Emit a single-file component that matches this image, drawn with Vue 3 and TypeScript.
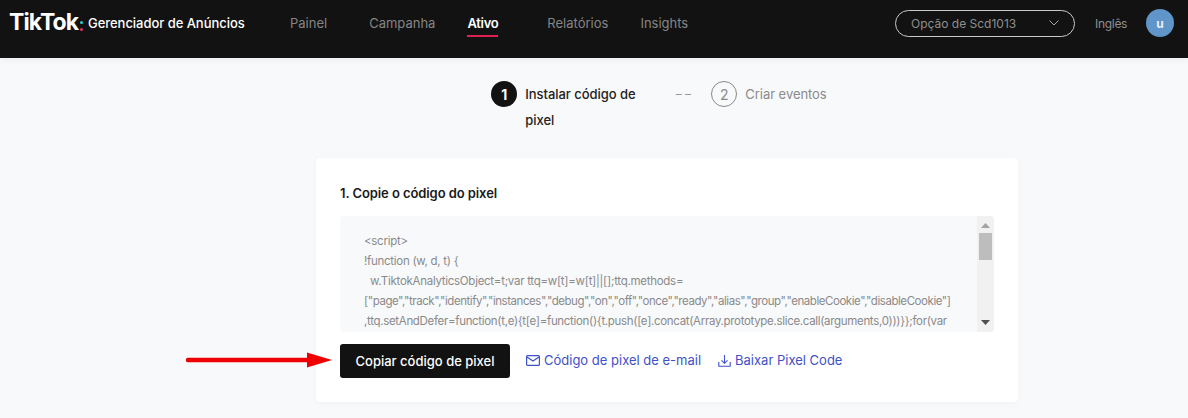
<script setup lang="ts">
const navItems: { label: string; active?: boolean }[] = [
  { label: 'Painel' },
  { label: 'Campanha' },
  { label: 'Ativo', active: true },
  { label: 'Relatórios' },
  { label: 'Insights' },
]
const codeLines: string[] = [
  '<script>',
  '!function (w, d, t) {',
  '  w.TiktokAnalyticsObject=t;var ttq=w[t]=w[t]||[];ttq.methods=',
  '["page","track","identify","instances","debug","on","off","once","ready","alias","group","enableCookie","disableCookie"]',
  ',ttq.setAndDefer=function(t,e){t[e]=function(){t.push([e].concat(Array.prototype.slice.call(arguments,0)))}};for(var',
]
</script>

<template>
  <div class="page">
    <header class="topbar">
      <div class="brand">
        <span class="logo">TikTok</span>
        <span class="colon"><i class="dot cyan"></i><i class="dot pink"></i></span>
        <span class="product">Gerenciador de Anúncios</span>
      </div>
      <nav class="nav">
        <a v-for="n in navItems" :key="n.label" class="nav-item" :class="{ active: n.active }">{{ n.label }}</a>
      </nav>
      <div class="top-right">
        <div class="selector">
          <span>Opção de Scd1013</span>
          <svg width="12" height="8" viewBox="0 0 12 8" fill="none"><path d="M1.5 1.5 6 6l4.5-4.5" stroke="#a8a8a8" stroke-width="1"/></svg>
        </div>
        <span class="lang">Inglês</span>
        <span class="avatar">u</span>
      </div>
    </header>

    <main class="content">
      <div class="steps">
        <div class="step current">
          <span class="num">1</span>
          <span class="step-label">Instalar código de pixel</span>
        </div>
        <span class="dashes">– –</span>
        <div class="step next">
          <span class="num">2</span>
          <span class="step-label">Criar eventos</span>
        </div>
      </div>

      <section class="card">
        <h2 class="title">1. Copie o código do pixel</h2>
        <div class="codebox">
          <div class="code">
            <div v-for="(l, i) in codeLines" :key="i" class="code-line">{{ l }}</div>
          </div>
          <div class="scrollbar">
            <svg class="arrow-btn" width="9" height="5" viewBox="0 0 9 5"><path d="M4.5 0 9 5H0z" fill="#a3a3a3"/></svg>
            <div class="thumb"></div>
            <div class="spacer"></div>
            <svg class="arrow-btn" width="9" height="5" viewBox="0 0 9 5"><path d="M0 0h9L4.500 5z" fill="#505050"/></svg>
          </div>
        </div>
        <div class="actions">
          <button class="copy">Copiar código de pixel</button>
          <a class="link">
            <svg width="14" height="11" viewBox="0 0 14 11" fill="none"><rect x=".6" y=".6" width="12.800" height="9.800" rx="1" stroke="#3f51c8" stroke-width="1.200"/><path d="M1 2l6 4 6-4" stroke="#3f51c8" stroke-width="1.200"/></svg>
            Código de pixel de e-mail
          </a>
          <a class="link">
            <svg width="13" height="13" viewBox="0 0 13 13" fill="none"><path d="M6.500 1v8M3.500 6.300l3 3 3-3" stroke="#3f51c8" stroke-width="1.100"/><path d="M.8 8v4.200h11.400V8" stroke="#3f51c8" stroke-width="1.100"/></svg>
            Baixar Pixel Code
          </a>
        </div>
      </section>
    </main>

    <svg class="annotation" width="146" height="16" viewBox="0 0 146 16">
      <path d="M2 8h122" stroke="#ee0000" stroke-width="4.500" stroke-linecap="round"/>
      <path d="M121 .5 146 8l-25 7.500z" fill="#ee0000"/>
    </svg>
  </div>
</template>

<style>
html, body { margin: 0; background: #f8f9fb; }
</style>

<style scoped>
.page {
  position: relative;
  width: 1188px;
  height: 418px;
  overflow: hidden;
  background: #f8f9fb;
  font-family: Inter, Lato, sans-serif;
}
.topbar {
  height: 58px;
  box-sizing: border-box;
  background: #121212;
  display: flex;
  align-items: flex-start;
  padding: 0 14px 0 9px;
  box-shadow: 0 2px 6px rgba(0, 0, 0, 0.05);
}
.brand { display: flex; align-items: center; height: 45px; width: 281px; flex: none; }
.logo { color: #fff; font: 700 23px/1 Inter, sans-serif; letter-spacing: -0.9px; width: 70px; }
.colon { display: flex; flex-direction: column; gap: 4px; margin: 7px 5px 0 1px; }
.dot { display: block; width: 3px; height: 3px; border-radius: 50%; }
.cyan { background: #25d4d0; }
.pink { background: #e8305e; }
.product { color: #fff; font-size: 13px; font-weight: 500; white-space: nowrap; letter-spacing: -0.04px; }
.nav { display: flex; gap: 33px; height: 45px; align-items: center; flex: none; }
.nav-item { position: relative; color: #858585; font-size: 13px; white-space: nowrap; }
.nav-item:nth-child(2) { margin-left: 9px; }
.nav-item.active { color: #fff; font-weight: 600; letter-spacing: -0.3px; margin: 0 16px 0 -1px; }
.nav-item.active::after {
  content: "";
  position: absolute;
  left: 0;
  right: 0;
  bottom: -6px;
  height: 2px;
  background: #e01f52;
}
.nav-item:last-child { margin-left: -1px; }
.top-right { margin-left: auto; display: flex; align-items: center; height: 46px; }
.selector {
  width: 180px;
  height: 27px;
  box-sizing: border-box;
  border: 1px solid #c9c9c9;
  border-radius: 14px;
  display: flex;
  align-items: center;
  justify-content: space-between;
  padding: 0 14px 0 15px;
  color: #8f8f8f;
  font-size: 12px;
  margin-right: 20px;
}
.lang { color: #8f8f8f; font-size: 12px; letter-spacing: -0.3px; width: 31px; margin-right: 20px; }
.avatar {
  width: 28px;
  height: 28px;
  border-radius: 50%;
  background: #5f95c9;
  color: #e9f0f8;
  font-size: 12px;
  font-weight: 700;
  display: flex;
  align-items: center;
  justify-content: center;
}
.content { display: flex; flex-direction: column; align-items: center; padding-left: 146px; }
.steps { display: flex; align-items: flex-start; padding-top: 23px; height: 100px; box-sizing: border-box; margin-left: -16px; }
.step { display: flex; align-items: flex-start; gap: 8px; }
.num {
  width: 26px;
  height: 26px;
  flex: none;
  border-radius: 50%;
  display: flex;
  align-items: center;
  justify-content: center;
  font-size: 14px;
  font-weight: 700;
  box-sizing: border-box;
}
.step-label { font-size: 13px; line-height: 26px; font-weight: 500; letter-spacing: -0.05px; }
.current .num { background: #121212; color: #fff; }
.current .step-label { color: #222; width: 118px; }
.next .num { border: 1px solid #8a8a8a; color: #8a8a8a; font-weight: 400; }
.next .step-label { color: #8a8a8a; white-space: nowrap; font-weight: 400; }
.dashes { color: #999; font-size: 12px; line-height: 26px; width: 18px; text-align: center; margin: 0 19px 0 31px; white-space: nowrap; }
.card {
  width: 702px;
  height: 244px;
  box-sizing: border-box;
  background: #fff;
  border-radius: 4px;
  padding: 25px 24px 24px;
  box-shadow: 0 2px 8px rgba(0, 0, 0, 0.03);
}
.title { margin: 0 0 13px; font-size: 13px; line-height: 20px; font-weight: 600; letter-spacing: -0.08px; color: #1a1a1a; }
.codebox { display: flex; height: 116px; background: #f8f9fb; border-radius: 4px; overflow: hidden; }
.code { flex: 1; min-width: 0; overflow: hidden; padding: 15px 0 0 24px; box-sizing: border-box; }
.code-line { font-size: 11.500px; letter-spacing: -0.28px; line-height: 20px; color: #8a8a8a; white-space: pre; }
.code-line:nth-child(4) { letter-spacing: -0.44px; }
.code-line:nth-child(5) { letter-spacing: -0.32px; }
.scrollbar {
  width: 17px;
  flex: none;
  background: #f1f1f1;
  display: flex;
  flex-direction: column;
  align-items: center;
  padding: 7px 0;
  box-sizing: border-box;
}
.arrow-btn { flex: none; }
.thumb { width: 13px; height: 27px; margin-top: 5px; background: #bdbdbd; }
.spacer { flex: 1; }
.actions { display: flex; align-items: center; margin-top: 12px; }
.copy {
  width: 170px;
  height: 34px;
  border: 0;
  border-radius: 3px;
  background: #121212;
  color: #fff;
  font: 500 13px Inter, sans-serif;
  padding: 0 0 1px;
  margin-right: 16px;
}
.link { display: flex; align-items: center; gap: 4px; color: #3f51c8; font-size: 13px; margin-right: 17px; padding-bottom: 2px; white-space: nowrap; }
.annotation { position: absolute; left: 186px; top: 352px; }
</style>
